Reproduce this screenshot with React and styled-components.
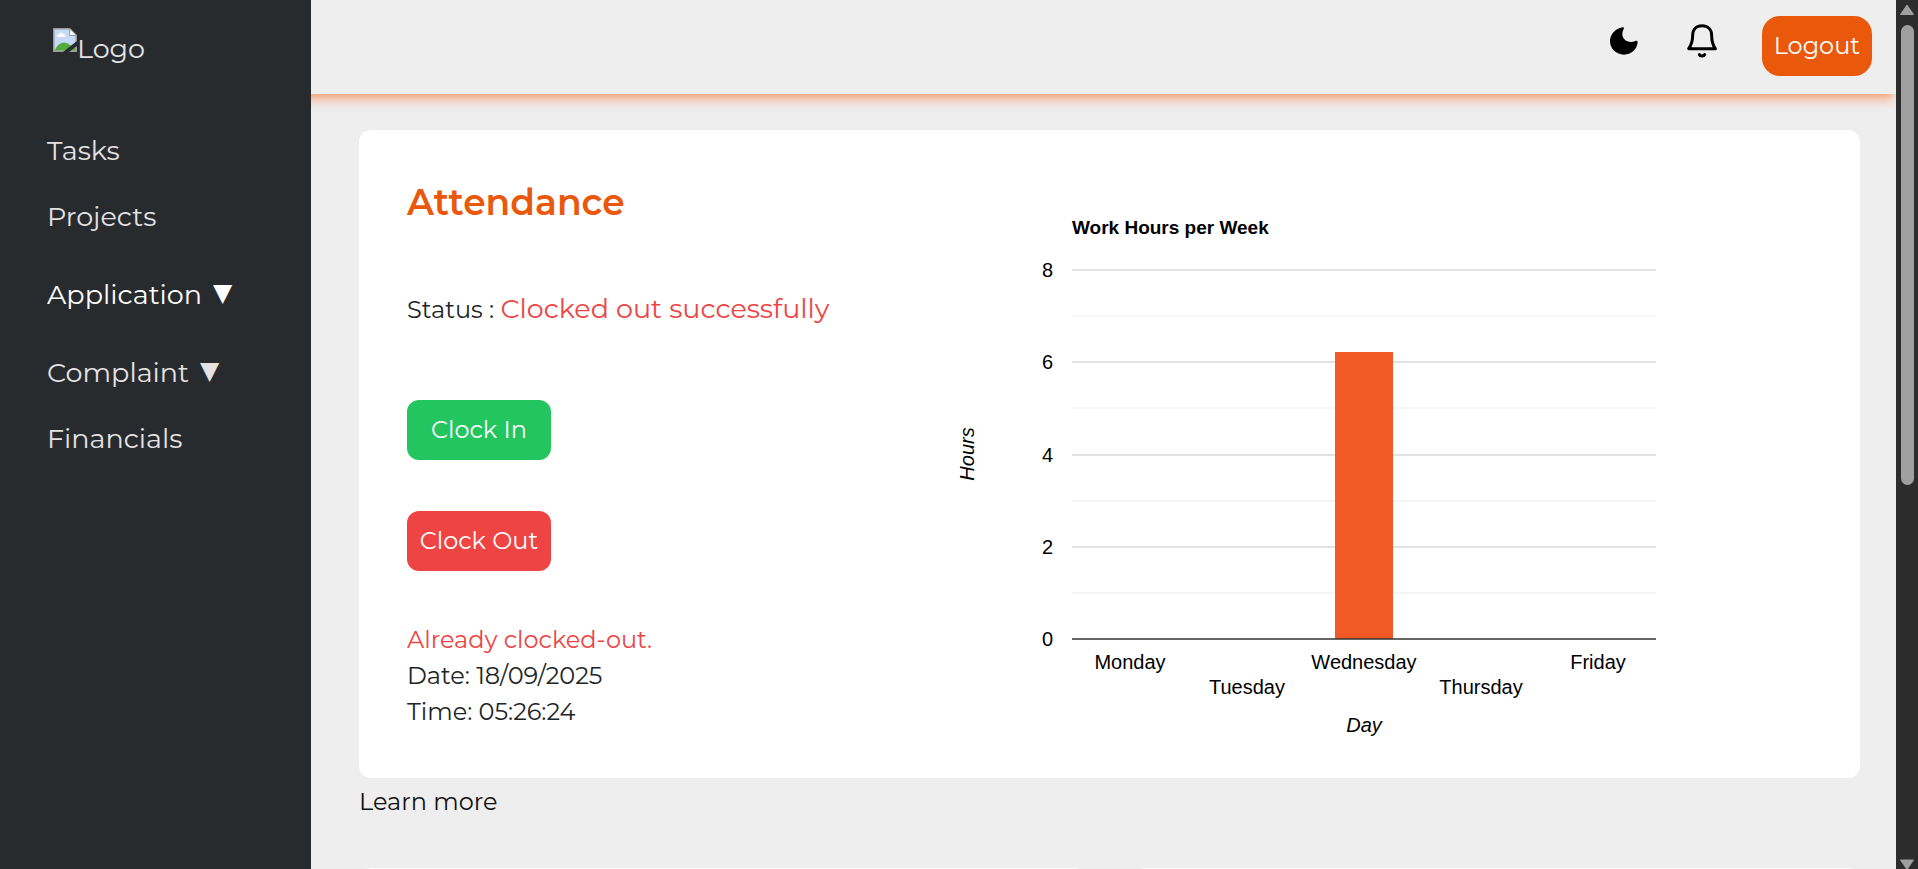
import React from 'react';
import styled, { createGlobalStyle } from 'styled-components';

const GlobalStyle = createGlobalStyle`
  *, *::before, *::after { box-sizing: border-box; }
  body {
    margin: 0;
    background: #eeeeee;
    color: #212427;
    font: 400 24px/36px Montserrat, Inter, sans-serif;
  }
  button { font: inherit; border: 0; cursor: pointer; }
  a { color: inherit; text-decoration: none; }
`;

const Shell = styled.div`
  display: flex;
  height: 100vh;
  overflow: hidden;
`;

const Sidebar = styled.aside`
  flex: 0 0 311px;
  z-index: 2;
  background: #272b2e;
  color: #e5e2e4;
  font-size: 27px;
`;

const Logo = styled.a`
  display: flex;
  padding: 28px 0 0 53px;
  line-height: 42px;
`;

const Nav = styled.nav`
  display: flex;
  flex-direction: column;
  align-items: flex-start;
  padding: 48px 0 0 47px;
`;

const NavLink = styled.a`
  line-height: 66px;
`;

const NavToggle = styled.button`
  display: flex;
  gap: 11px;
  padding: 0;
  margin-top: 12px;
  background: none;
  line-height: 66px;
  color: ${(p) => (p.$active ? '#ffffff' : '#e5e2e4')};
`;

const Caret = styled.span`
  font-family: "DejaVu Sans", sans-serif;
  font-size: 25px;
  line-height: 62px;
`;

const Main = styled.main`
  flex: 1;
  min-width: 0;
`;

/* Runs a little way under the sidebar so that its shadow has no faded left end. */
const Header = styled.header`
  display: flex;
  justify-content: flex-end;
  align-items: flex-start;
  gap: 42px;
  height: 94px;
  margin-left: -24px;
  padding: 16px 24px 0;
  background: #eeeeee;
  box-shadow: 0 9px 10px -3px rgba(255, 94, 10, 0.4), 0 4px 6px -3px rgba(255, 94, 10, 0.25);
`;

const IconButton = styled.button`
  display: flex;
  align-items: center;
  width: 36px;
  height: 50px;
  padding: 0;
  background: none;
  color: #000000;
`;

const LogoutButton = styled.button`
  min-width: 110px;
  height: 60px;
  padding: 0 12px;
  border-radius: 18px;
  background: #ea580c;
  color: #ffffff;
`;

const Content = styled.div`
  padding: 36px 36px 0 48px;
`;

const Card = styled.section`
  display: flex;
  justify-content: space-between;
  padding: 24px;
  border-radius: 12px;
  background: #ffffff;
`;

const Attendance = styled.div`
  display: flex;
  flex-direction: column;
  align-items: flex-start;
  padding: 24px;
  white-space: nowrap;
`;

const Title = styled.h1`
  margin: 0 0 66px;
  color: #ea580c;
  font-size: 36px;
  font-weight: 600;
  line-height: 48px;
`;

const Status = styled.p`
  margin: 0 0 72px;
`;

const StatusValue = styled.span`
  color: #ef4444;
  font-size: 27px;
  line-height: 30px;
`;

const ClockButton = styled.button`
  width: 144px;
  height: 60px;
  padding: 0;
  margin-bottom: 51px;
  border-radius: 12px;
  background: ${(p) => (p.$tone === 'in' ? '#22c55e' : '#ef4444')};
  color: #ffffff;
`;

const Line = styled.p`
  margin: 0;
  color: ${(p) => (p.$error ? '#ef4444' : 'inherit')};
`;

const ChartSvg = styled.svg`
  flex: 0 1 945px;
  min-width: 0;
  height: 600px;
  font: 400 20px "Liberation Sans", Arial, sans-serif;
`;

const ChartTitle = styled.text`
  font-size: 19px;
  font-weight: 700;
`;

const AxisTitle = styled.text`
  font-style: italic;
  text-anchor: middle;
`;

const LearnMore = styled.a`
  display: block;
  margin-top: 6px;
  color: #111111;
`;

const CardRow = styled.div`
  display: grid;
  grid-template-columns: 1fr 1fr;
  gap: 48px;
  margin-top: 48px;
`;

const EmptyCard = styled.section`
  height: 300px;
  border-radius: 12px;
  background: #ffffff;
`;

const ScrollBar = styled.div`
  flex: 0 0 22px;
  z-index: 1;
  display: flex;
  flex-direction: column;
  align-items: center;
  justify-content: space-between;
  background: #2c2c2c;
  padding-top: 4px;
  color: #9f9f9f;
`;

const ScrollThumb = styled.div`
  width: 13px;
  height: 460px;
  margin: 9px 0 auto;
  border-radius: 7px;
  background: #9f9f9f;
`;

const BrokenImage = () => (
  <svg width="24" height="24" viewBox="0 0 24 24" aria-hidden="true">
    <path d="M0 0H17L24 7V24H0Z" fill="#9a9a9a" />
    <path d="M1.500 1.500H16V8H22.500V22.500H1.500Z" fill="#c6d9f7" />
    <path d="M17 1.500L22.500 7H17Z" fill="#ffffff" />
    <path d="M4 9Q3 6.500 6 6Q8 3 10.500 6Q13 6.500 12 9Z" fill="#ffffff" />
    <path d="M1.500 22.500Q5 15 11 14.500Q15 14.500 17 17L22.500 20V22.500Z" fill="#55ab38" />
    <path d="M24 13L10 24H16L24 18Z" fill="#272b2e" />
  </svg>
);

const Moon = () => (
  <svg width="36" height="36" viewBox="138 69 108 108" fill="currentColor" aria-hidden="true">
    <path d="M188 82C165 86 150 104 150 124C150 146 169 164 192 164C214 164 231 148 233 127C233 122 230 121 226 123C207 132 187 120 187 103C187 97 189 92 191 87C193 83 191 81 188 82Z" />
  </svg>
);

const Bell = () => (
  <svg
    width="36"
    height="36"
    viewBox="372 69 108 108"
    fill="none"
    stroke="currentColor"
    strokeWidth="9"
    strokeLinecap="round"
    strokeLinejoin="round"
    aria-hidden="true"
  >
    <path d="M386 146H466C459 137 455 125 455 106C455 88 443 77 426 77C409 77 398 88 398 106C398 125 393 137 386 146Z" />
    <path d="M418 164C420 169 432 169 434 164" />
  </svg>
);

const PLOT = { left: 181, right: 765, top: 116, bottom: 485 };
const MAX_HOURS = 8;
const BAR_WIDTH = 58;

const week = [
  { day: 'Monday', hours: 0 },
  { day: 'Tuesday', hours: 0 },
  { day: 'Wednesday', hours: 6.22 },
  { day: 'Thursday', hours: 0 },
  { day: 'Friday', hours: 0 },
];

const yFor = (hours) =>
  Math.round(PLOT.bottom - (hours / MAX_HOURS) * (PLOT.bottom - PLOT.top));
const xFor = (index) =>
  Math.round(PLOT.left + ((index + 0.5) * (PLOT.right - PLOT.left)) / week.length);

const HoursChart = () => (
  <ChartSvg viewBox="0 0 945 600" role="img" aria-label="Work Hours per Week">
    <ChartTitle x={PLOT.left} y="80">Work Hours per Week</ChartTitle>
    {[8, 7, 6, 5, 4, 3, 2, 1].map((h) => (
      <line
        key={h}
        x1={PLOT.left}
        x2={PLOT.right}
        y1={yFor(h)}
        y2={yFor(h)}
        stroke={h % 2 ? '#f5f5f5' : '#e2e2e2'}
        strokeWidth="2"
      />
    ))}
    {[8, 6, 4, 2, 0].map((h) => (
      <text key={h} x="162" y={yFor(h) + 7} textAnchor="end">{h}</text>
    ))}
    {week.map(({ day, hours }, i) => (
      <React.Fragment key={day}>
        <rect
          x={xFor(i) - BAR_WIDTH / 2}
          y={yFor(hours)}
          width={BAR_WIDTH}
          height={PLOT.bottom - yFor(hours)}
          fill="#f15a24"
        />
        <text x={xFor(i)} y={i % 2 ? 540 : 515} textAnchor="middle">{day}</text>
      </React.Fragment>
    ))}
    <line x1={PLOT.left} x2={PLOT.right} y1={PLOT.bottom} y2={PLOT.bottom} stroke="#333333" strokeWidth="1.5" />
    <AxisTitle x="473" y="578">Day</AxisTitle>
    <AxisTitle transform="translate(83 300) rotate(-90)">Hours</AxisTitle>
  </ChartSvg>
);

export default function App() {
  return (
    <Shell>
      <GlobalStyle />
      <Sidebar>
        <Logo href="#home">
          <BrokenImage />
          <span>Logo</span>
        </Logo>
        <Nav>
          <NavLink href="#tasks">Tasks</NavLink>
          <NavLink href="#projects">Projects</NavLink>
          <NavToggle $active>Application <Caret>▼</Caret></NavToggle>
          <NavToggle>Complaint <Caret>▼</Caret></NavToggle>
          <NavLink href="#financials">Financials</NavLink>
        </Nav>
      </Sidebar>
      <Main>
        <Header>
          <IconButton aria-label="Dark mode"><Moon /></IconButton>
          <IconButton aria-label="Notifications"><Bell /></IconButton>
          <LogoutButton>Logout</LogoutButton>
        </Header>
        <Content>
          <Card>
            <Attendance>
              <Title>Attendance</Title>
              <Status>Status : <StatusValue>Clocked out successfully</StatusValue></Status>
              <ClockButton $tone="in">Clock In</ClockButton>
              <ClockButton $tone="out">Clock Out</ClockButton>
              <Line $error>Already clocked-out.</Line>
              <Line>Date: 18/09/2025</Line>
              <Line>Time: 05:26:24</Line>
            </Attendance>
            <HoursChart />
          </Card>
          <LearnMore href="#more">Learn more</LearnMore>
          <CardRow>
            <EmptyCard />
            <EmptyCard />
          </CardRow>
        </Content>
      </Main>
      <ScrollBar aria-hidden="true">
        <svg width="16" height="12" viewBox="0 0 16 12" fill="currentColor">
          <path d="M8 1L14.500 10.500H1.500Z" stroke="currentColor" strokeLinejoin="round" />
        </svg>
        <ScrollThumb />
        <svg width="16" height="10" viewBox="0 0 16 10" fill="currentColor">
          <path d="M8 10.500L14.500 1H1.500Z" stroke="currentColor" strokeLinejoin="round" />
        </svg>
      </ScrollBar>
    </Shell>
  );
}
